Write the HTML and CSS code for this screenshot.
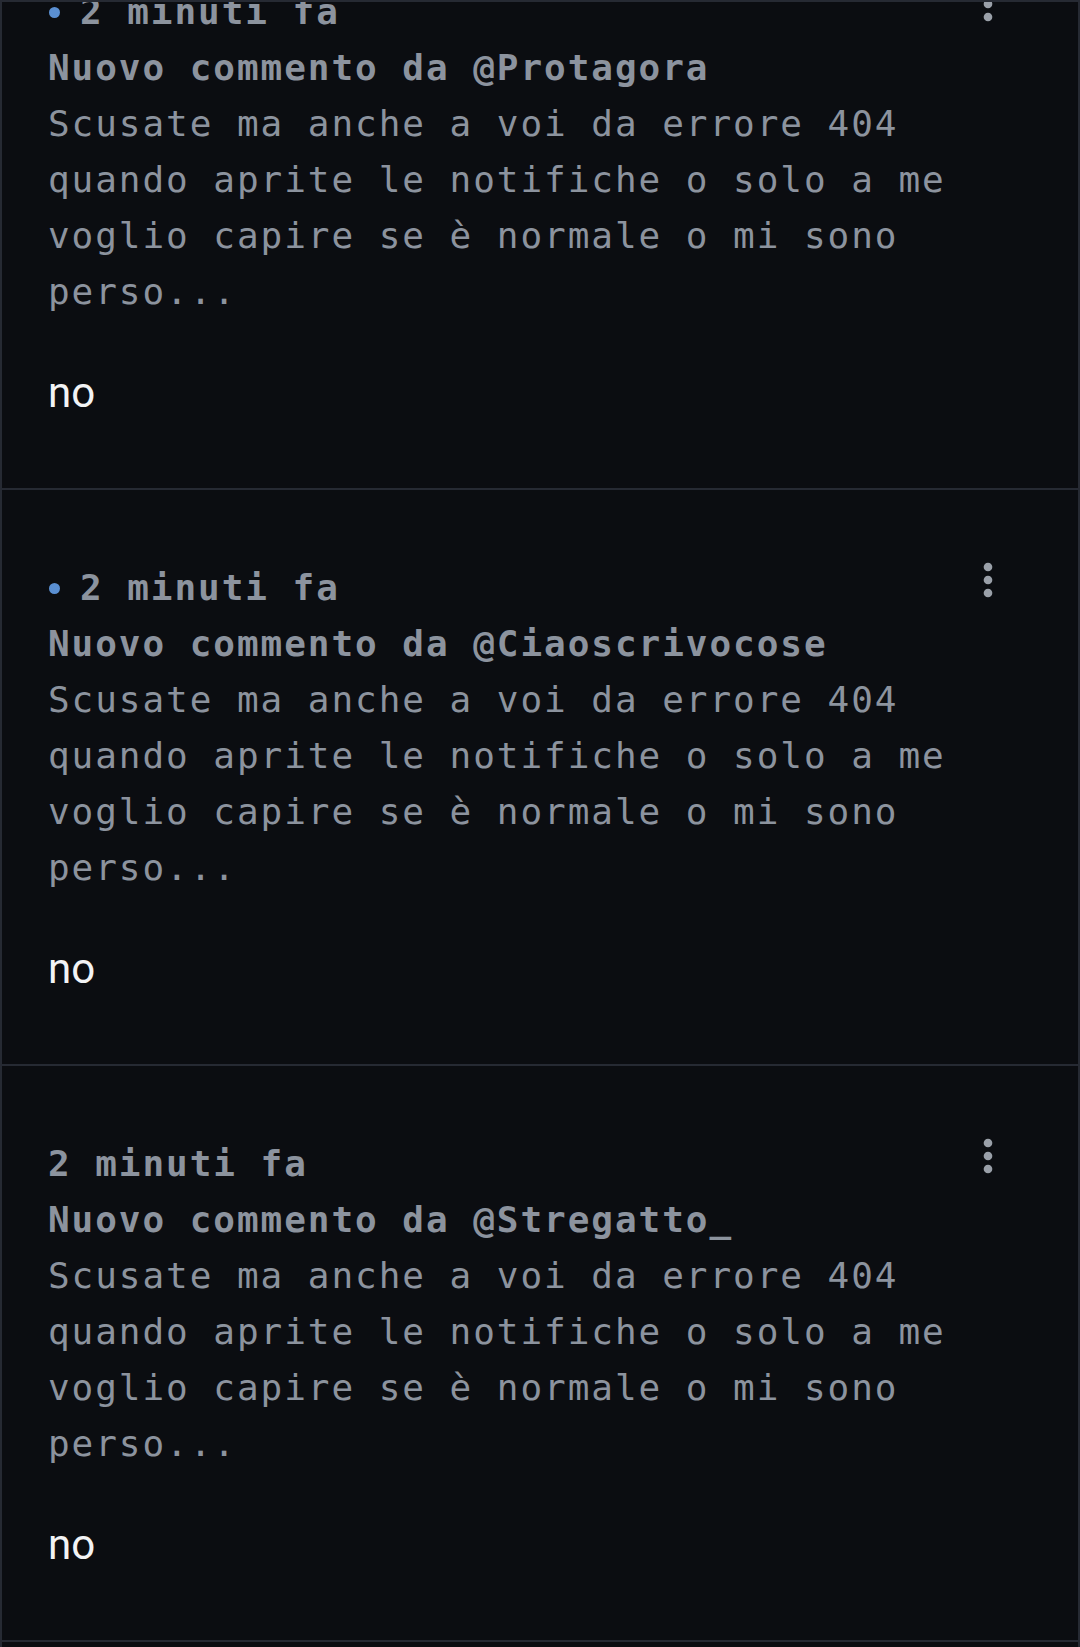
FILE: index.html
```html
<!DOCTYPE html>
<html lang="it">
<head>
<meta charset="utf-8">
<title>Notifiche</title>
<link rel="stylesheet" href="styles.css">
</head>
<body>
<div class="frame">
  <div class="list">
    <article class="card">
      <div class="card-body">
        <div class="meta"><span class="dot"></span><span class="time">2 minuti fa</span></div>
        <div class="title">Nuovo commento da @Protagora</div>
        <p class="excerpt">Scusate ma anche a voi da errore 404 quando aprite le notifiche o solo a me voglio capire se è normale o mi sono perso...</p>
        <p class="reply">no</p>
      </div>
      <button class="menu" aria-label="Altro"><svg viewBox="0 0 24 24" width="52" height="52"><circle cx="12" cy="6" r="2"/><circle cx="12" cy="12" r="2"/><circle cx="12" cy="18" r="2"/></svg></button>
    </article>
    <article class="card">
      <div class="card-body">
        <div class="meta"><span class="dot"></span><span class="time">2 minuti fa</span></div>
        <div class="title">Nuovo commento da @Ciaoscrivocose</div>
        <p class="excerpt">Scusate ma anche a voi da errore 404 quando aprite le notifiche o solo a me voglio capire se è normale o mi sono perso...</p>
        <p class="reply">no</p>
      </div>
      <button class="menu" aria-label="Altro"><svg viewBox="0 0 24 24" width="52" height="52"><circle cx="12" cy="6" r="2"/><circle cx="12" cy="12" r="2"/><circle cx="12" cy="18" r="2"/></svg></button>
    </article>
    <article class="card">
      <div class="card-body">
        <div class="meta"><span class="time">2 minuti fa</span></div>
        <div class="title">Nuovo commento da @Stregatto_</div>
        <p class="excerpt">Scusate ma anche a voi da errore 404 quando aprite le notifiche o solo a me voglio capire se è normale o mi sono perso...</p>
        <p class="reply">no</p>
      </div>
      <button class="menu" aria-label="Altro"><svg viewBox="0 0 24 24" width="52" height="52"><circle cx="12" cy="6" r="2"/><circle cx="12" cy="12" r="2"/><circle cx="12" cy="18" r="2"/></svg></button>
    </article>
  </div>
</div>
</body>
</html>
```
FILE: styles.css
```css
html, body {
  margin: 0;
  background: #0b0d11;
}

.frame {
  height: 1647px;
  box-sizing: border-box;
  border: 2px solid #262a33;
  border-bottom: 0;
  overflow: hidden;
  background: #0b0d11;
}

.list {
  margin-top: -88px;
}

.card {
  display: flex;
  gap: 8px;
  padding: 70px 64px 67px 46px;
  border-bottom: 2px solid #262a33;
}

.card-body {
  flex: 1;
  min-width: 0;
  font-family: "DejaVu Sans Mono", "Liberation Mono", monospace;
  font-size: 36px;
  line-height: 56px;
  letter-spacing: 1.95px;
  color: #8c939e;
}

.meta {
  display: flex;
  align-items: center;
  gap: 20px;
  font-weight: bold;
}

.dot {
  width: 11px;
  height: 11px;
  margin-left: 1px;
  border-radius: 50%;
  background: #5a8fd2;
  flex: none;
}

.title {
  font-weight: bold;
}

.excerpt {
  margin: 0;
}

.reply {
  margin: 45px 0 0;
  font-family: Roboto, "Noto Sans", sans-serif;
  font-size: 42px;
  line-height: 56px;
  letter-spacing: 0;
  color: #f2f3f5;
}

.menu {
  flex: none;
  width: 52px;
  height: 52px;
  margin-top: -6px;
  padding: 0;
  border: 0;
  background: none;
  color: #9aa0a9;
}

.menu svg {
  display: block;
  fill: currentColor;
}
```
